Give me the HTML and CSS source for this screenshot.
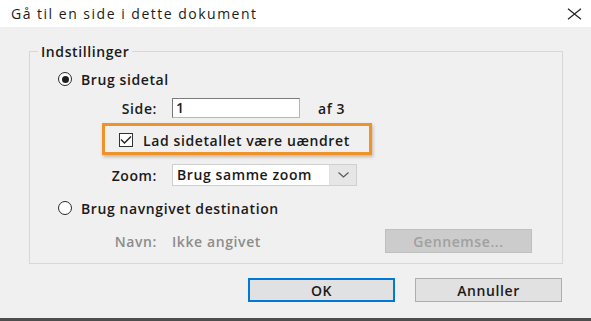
FILE: index.html
```html
<!DOCTYPE html>
<html lang="da">
<head>
<meta charset="utf-8">
<title>Gå til en side i dette dokument</title>
<link rel="stylesheet" href="styles.css">
</head>
<body>
<div class="dialog">
  <div class="titlebar">
    <span class="title">Gå til en side i dette dokument</span>
    <svg class="close" width="15" height="12" viewBox="0 0 15 12"><path d="M1 0.8 L14 11.2 M14 0.8 L1 11.2" stroke="#222" stroke-width="1.2" fill="none"/></svg>
  </div>
  <div class="content">
    <div class="group">
      <div class="legend">Indstillinger</div>
      <div class="radio-row first">
        <span class="radio checked"></span>
        <span class="label">Brug sidetal</span>
      </div>
      <div class="field-row side-row">
        <span class="field-label">Side:</span>
        <div class="textbox">1</div>
        <span class="of">af 3</span>
      </div>
      <div class="highlight">
        <span class="checkbox"><svg width="12" height="10" viewBox="0 0 12 10"><path d="M1 4.5 L4.5 8 L11 1.5" stroke="#222" stroke-width="1.4" fill="none"/></svg></span>
        <span class="label">Lad sidetallet være uændret</span>
      </div>
      <div class="field-row zoom-row">
        <span class="field-label">Zoom:</span>
        <div class="select">
          <span class="select-text">Brug samme zoom</span>
          <span class="select-arrow"><svg width="11" height="6" viewBox="0 0 11 6"><path d="M0.5 0.5 L5.5 5 L10.5 0.5" stroke="#555" stroke-width="1.1" fill="none"/></svg></span>
        </div>
      </div>
      <div class="radio-row second">
        <span class="radio"></span>
        <span class="label">Brug navngivet destination</span>
      </div>
      <div class="field-row navn-row">
        <span class="field-label disabled">Navn:</span>
        <span class="disabled value">Ikke angivet</span>
        <span class="btn disabled-btn">Gennemse...</span>
      </div>
    </div>
    <div class="buttons">
      <span class="btn primary">OK</span>
      <span class="btn">Annuller</span>
    </div>
  </div>
  <div class="bottom-edge"></div>
</div>
</body>
</html>
```
FILE: styles.css
```css
* { box-sizing: border-box; }
html, body { margin: 0; padding: 0; }
body {
  width: 591px;
  height: 321px;
  overflow: hidden;
  background: #f0f0f0;
  font-family: "Open Sans", "Noto Sans", sans-serif;
  font-weight: 600;
  font-size: 14px;
  letter-spacing: 0.6px;
  color: #1a1a1a;
}
.dialog { display: flex; flex-direction: column; height: 321px; }
.titlebar {
  height: 27px;
  background: #ffffff;
  display: flex;
  align-items: center;
  justify-content: space-between;
  padding: 0 9px 1px 11px;
  flex: none;
}
.title { font-size: 14px; font-weight: 500; letter-spacing: 1.5px; }
.close { margin-top: 1px; }
.content { flex: 1; display: flex; flex-direction: column; }
.group {
  margin: 24px 0 0 29px;
  width: 534px;
  height: 213px;
  border: 1px solid #d7d7d7;
  display: flex;
  flex-direction: column;
}
.legend {
  align-self: flex-start;
  margin: -9px 0 0 8px;
  padding: 1px 3px 0 3px;
  line-height: 16px;
  height: 17px;
  background: #f0f0f0;
}
.radio-row { display: flex; align-items: center; height: 20px; margin-left: 28px; }
.radio-row.first { margin-top: 9px; }
.radio-row.second { margin-top: 12px; }
.radio {
  width: 14px; height: 14px;
  border: 1.5px solid #2a2a2a;
  border-radius: 50%;
  background: #fff;
  display: flex; align-items: center; justify-content: center;
  margin-right: 9px;
}
.radio.checked::after {
  content: "";
  width: 7px; height: 7px;
  border-radius: 50%;
  background: #1e1e1e;
}
.field-row { display: flex; align-items: center; }
.field-label { width: 128px; text-align: right; padding-right: 1px; margin-right: 14px; }
.side-row { margin-top: 9px; height: 20px; }
.textbox {
  width: 128px; height: 20px;
  background: #fff;
  border: 1px solid #7a7a7a;
  border-right-color: #b5b5b5;
  border-bottom-color: #b5b5b5;
  padding: 0 3px;
  line-height: 18px;
}
.of { margin-left: 18px; }
.highlight {
  margin: 5px 0 0 72px;
  width: 270px;
  height: 32px;
  border: 3px solid #f0922b;
  box-shadow: 1px 2px 3px rgba(120, 80, 30, 0.35);
  display: flex;
  align-items: center;
  padding: 2px 0 0 14px;
}
.checkbox {
  width: 14px; height: 14px;
  border: 1px solid #333;
  background: #fff;
  display: flex; align-items: center; justify-content: center;
  margin-right: 10px;
}
.zoom-row { margin-top: 9px; height: 22px; }
.select {
  width: 185px; height: 22px;
  display: flex;
  border: 1px solid #cfcfcf;
  background: #fff;
}
.select-text { flex: 1; line-height: 20px; padding-left: 4px; }
.select-arrow {
  width: 27px;
  background: #e6e6e6;
  border-left: 1px solid #e0e0e0;
  display: flex; align-items: center; justify-content: center;
}
.navn-row { margin-top: 11px; height: 24px; }
.disabled { color: #8c8c8c; }
.value { width: 213px; }
.btn {
  display: flex; align-items: center; justify-content: center;
  width: 147px; height: 24px;
  background: #e1e1e1;
  border: 1px solid #adadad;
}
.disabled-btn { background: #cccccc; border-color: #bfbfbf; color: #a0a0a0; }
.buttons {
  display: flex;
  justify-content: flex-end;
  gap: 20px;
  margin: 14px 29px 0 0;
}
.btn.primary { border: 2px solid #0078d7; }
.bottom-edge { height: 3px; background: #4d4d4d; margin-top: auto; }
```
